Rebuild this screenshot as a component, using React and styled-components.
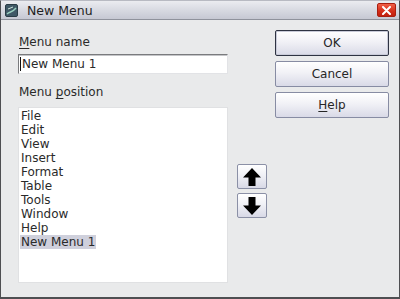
import styled, { createGlobalStyle } from 'styled-components'

const GlobalStyle = createGlobalStyle`
  html, body {
    margin: 0;
    padding: 0;
    background: #e9eaeb;
  }
  * {
    box-sizing: border-box;
  }
`

const Window = styled.div`
  width: 400px;
  height: 299px;
  display: flex;
  flex-direction: column;
  background: #e9eaeb;
  border: 1px solid #4e4f52;
  border-bottom-width: 2px;
  border-top-color: #b8bac2;
  font-family: 'DejaVu Sans', Verdana, sans-serif;
  font-size: 12px;
  color: #2a2a2a;
  overflow: hidden;
`

const TitleBar = styled.div`
  height: 19px;
  flex: none;
  display: flex;
  align-items: center;
  padding: 0 3px 0 4px;
  background: linear-gradient(#ebecf0, #d6d8e0 55%, #c6c8d3);
  border-bottom: 1px solid #8f929c;
`

const TitleText = styled.span`
  flex: 1;
  margin-left: 9px;
  font-size: 12.5px;
  color: #1e1e1e;
  padding-top: 1px;
`

const CloseButton = styled.div`
  width: 19px;
  height: 14px;
  display: flex;
  align-items: center;
  justify-content: center;
  border-radius: 2px;
  background: linear-gradient(#f06048, #d42c18 60%, #c0200f);
  border: 1px solid #a81e10;
`

const Body = styled.div`
  flex: 1;
  display: flex;
  align-items: flex-start;
  padding: 10px 0 0 17px;
`

const LeftColumn = styled.div`
  width: 210px;
  display: flex;
  flex-direction: column;
  padding-top: 5px;
`

const Label = styled.div`
  line-height: 14px;
  height: 14px;
  margin-top: ${props => props.$gap || 0}px;
  padding-left: 1px;
`

const NameInput = styled.div`
  margin-top: 5px;
  height: 20px;
  width: 210px;
  background: #ffffff;
  border: 1px solid;
  border-color: #7a7b7e #e2e3e6 #e2e3e6 #7a7b7e;
  box-shadow: inset 0 1px 0 #c4c5c8;
  display: flex;
  align-items: center;
  padding-left: 1px;
  line-height: 14px;
`

const Caret = styled.span`
  width: 1px;
  height: 14px;
  background: #111;
  margin-right: 1px;
`

const ListBox = styled.div`
  margin-top: 8px;
  height: 176px;
  width: 210px;
  background: #ffffff;
  border: 1px solid #e0e1e3;
  padding: 1px 0 0 1px;
  display: flex;
  flex-direction: column;
  align-items: flex-start;
`

const ListItem = styled.div`
  height: 14px;
  line-height: 14px;
  padding: 0 1px;
  background: ${props => (props.$selected ? '#cfd0dc' : 'transparent')};
`

const ArrowColumn = styled.div`
  margin: 134px 0 0 9px;
  display: flex;
  flex-direction: column;
  gap: 4px;
`

const ArrowButton = styled.div`
  width: 30px;
  height: 25px;
  display: flex;
  align-items: center;
  justify-content: center;
  border: 1px solid #8b90a6;
  border-radius: 2px;
  background: linear-gradient(#ffffff, #eeeff5 50%, #d8d9e6);
`

const ButtonColumn = styled.div`
  margin-left: 8px;
  width: 114px;
  display: flex;
  flex-direction: column;
  gap: 5px;
`

const DialogButton = styled.div`
  height: 26px;
  display: flex;
  align-items: center;
  justify-content: center;
  border-radius: 2px;
  border: 1px solid ${props => (props.$default ? '#2e3342' : '#878ca3')};
  box-shadow: ${props => (props.$default ? 'inset 0 0 0 1px #c9cbd8' : 'none')};
  background: linear-gradient(#ffffff, #f1f1f6 45%, #d9dae7);
  color: #262626;
`

const Mnemonic = styled.span`
  text-decoration: underline;
  text-underline-offset: 2px;
`

const AppIcon = () => (
  <svg width="13" height="13" viewBox="0 0 13 13">
    <rect x="0.5" y="0.5" width="12" height="12" rx="1.5" fill="#3f5866" stroke="#2a3c46" />
    <path d="M2 10 C5 7, 7 9, 11 4" stroke="#9ad0c0" strokeWidth="1.4" fill="none" />
    <path d="M3 5 L8 3" stroke="#cfe6de" strokeWidth="1" fill="none" />
  </svg>
)

const CloseIcon = () => (
  <svg width="9" height="9" viewBox="0 0 9 9">
    <path d="M1 1 L8 8 M8 1 L1 8" stroke="#ffffff" strokeWidth="2" strokeLinecap="round" />
  </svg>
)

const ArrowIcon = ({ down }) => (
  <svg width="20" height="20" viewBox="0 0 20 20" style={down ? { transform: 'rotate(180deg)' } : undefined}>
    <polygon points="10,1 19,10.5 13.5,10.5 13.5,19 6.5,19 6.5,10.5 1,10.5" fill="#000" />
  </svg>
)

const menus = ['File', 'Edit', 'View', 'Insert', 'Format', 'Table', 'Tools', 'Window', 'Help', 'New Menu 1']

const App = () => {
  return (
    <>
      <GlobalStyle />
      <Window>
        <TitleBar>
          <AppIcon />
          <TitleText>New Menu</TitleText>
          <CloseButton>
            <CloseIcon />
          </CloseButton>
        </TitleBar>
        <Body>
          <LeftColumn>
            <Label>
              <Mnemonic>M</Mnemonic>enu name
            </Label>
            <NameInput>
              <Caret />
              New Menu 1
            </NameInput>
            <Label $gap={11}>
              Menu <Mnemonic>p</Mnemonic>osition
            </Label>
            <ListBox>
              {menus.map((m, i) => (
                <ListItem key={m} $selected={i === menus.length - 1}>
                  {m}
                </ListItem>
              ))}
            </ListBox>
          </LeftColumn>
          <ArrowColumn>
            <ArrowButton>
              <ArrowIcon />
            </ArrowButton>
            <ArrowButton>
              <ArrowIcon down />
            </ArrowButton>
          </ArrowColumn>
          <ButtonColumn>
            <DialogButton $default>OK</DialogButton>
            <DialogButton>Cancel</DialogButton>
            <DialogButton>
              <Mnemonic>H</Mnemonic>elp
            </DialogButton>
          </ButtonColumn>
        </Body>
      </Window>
    </>
  )
}

export default App
